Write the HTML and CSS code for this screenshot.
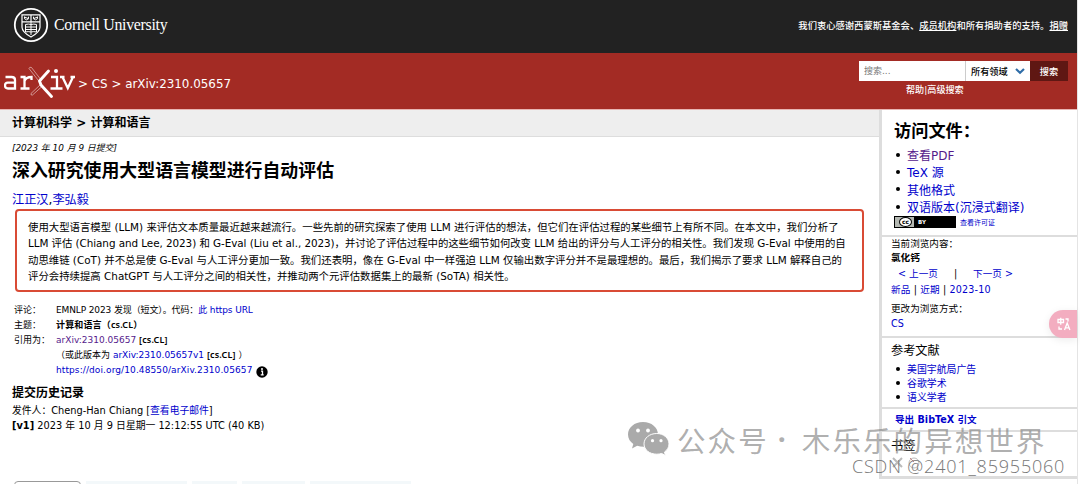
FILE: index.html
```html
<!DOCTYPE html>
<html lang="zh-CN">
<head>
  <meta charset="utf-8">
  <title>深入研究使用大型语言模型进行自动评估</title>
  <link rel="stylesheet" href="styles.css">
</head>
<body>
  <div class="page">
    <header>
      <div class="cornell-bar">
        <div class="cornell-logo">
          <svg width="36" height="36" viewBox="0 0 36 36" fill="none" stroke="#fff">
            <circle cx="18" cy="18" r="16.2" stroke-width="1.8"/>
            <path d="M9 7.800h18v12.500c0 4.600-4.600 7.300-9 9.700-4.400-2.400-9-5.100-9-9.700z" stroke-width="1.200"/>
            <path d="M9 14.800h18M18 8v7" stroke-width="1.200"/>
            <path d="M11.500 9.700v2q2 2.300 4 0v-2M20.500 9.700v2q2 2.300 4 0v-2M11.500 10l4 1.700M20.500 11.700l4-1.700" stroke-width="1"/>
            <path d="M12.500 17.500q2.800-.8 5.500 0 2.700-.8 5.500 0v7.500q-2.800-.8-5.500 0-2.700-.8-5.500 0zM18 15v13M12.500 20h11M12.500 22.500h11" stroke-width="1"/>
          </svg>
          <span>Cornell University</span>
        </div>
        <div class="sponsors">我们衷心感谢西蒙斯基金会、<a href="#">成员机构</a>和所有捐助者的支持。<a href="#">捐赠</a></div>
      </div>
      <div class="arxiv-bar">
        <div class="breadcrumbs">
          <svg class="arxiv-logo" width="72" height="34" viewBox="0 0 72 34" fill="none" stroke="#fff">
            <path d="M1.500 11h6q3.500 0 3.500 3v8.500H4q-3 0-3-3t3-2.800h7M16.500 11h4v11.500M16.500 22.500h9M20.500 15q1.500-4 7-4v3" stroke-width="2.300"/>
            <path d="M47 11h6v11.500M46.500 22.500h12M58.500 11l5.300 11L69 11M56 11h4.500M66.500 11H71" stroke-width="2.300"/>
            <circle cx="52" cy="5" r="2" fill="#fff" stroke="none"/>
            <path d="M44.500 5l-9 10 1.500 4 10.500 11.500" stroke-width="2.900" stroke-linecap="round" stroke-linejoin="round"/>
            <path d="M25 2.500l11 14M27.500 1.500l10 13M25 2.500q.5-2 2.500-1M37 18L27 27.500q-.500 2 1.500 1.500l10-9" stroke-width=".7" opacity=".7"/>
          </svg>
          <span>&gt; <a href="#">CS</a> &gt; arXiv:2310.05657</span>
        </div>
        <form class="search">
          <div class="search-row">
            <input type="text" placeholder="搜索...">
            <div class="select">所有领域
              <svg width="12" height="8" viewBox="0 0 12 8"><path d="M2 2l4 3.700L10 2" fill="none" stroke="#2f6da8" stroke-width="2.200"/></svg>
            </div>
            <button type="button">搜索</button>
          </div>
          <div class="help"><a href="#">帮助</a>|<a href="#">高级搜索</a></div>
        </form>
      </div>
    </header>

    <div class="columns">
      <main>
        <div class="subheader">计算机科学 &gt; 计算和语言</div>
        <div class="dateline">[2023 年 10 月 9 日提交]</div>
        <h1>深入研究使用大型语言模型进行自动评估</h1>
        <div class="authors"><a href="#">江正汉</a>,<a href="#">李弘毅</a></div>
        <blockquote class="abstract">
          <div>使用大型语言模型 (LLM) 来评估文本质量最近越来越流行。一些先前的研究探索了使用 LLM 进行评估的想法，但它们在评估过程的某些细节上有所不同。在本文中，我们分析了</div>
          <div class="tight">LLM 评估 (Chiang and Lee, 2023) 和 G-Eval (Liu et al., 2023)，并讨论了评估过程中的这些细节如何改变 LLM 给出的评分与人工评分的相关性。我们发现 G-Eval 中使用的自</div>
          <div>动思维链 (CoT) 并不总是使 G-Eval 与人工评分更加一致。我们还表明，像在 G-Eval 中一样强迫 LLM 仅输出数字评分并不是最理想的。最后，我们揭示了要求 LLM 解释自己的</div>
          <div>评分会持续提高 ChatGPT 与人工评分之间的相关性，并推动两个元评估数据集上的最新 (SoTA) 相关性。</div>
        </blockquote>
        <table class="metatable">
          <tr><td>评论：</td><td class="comments">EMNLP 2023 发现（短文）。代码：<a href="#">此 https URL</a></td></tr>
          <tr><td>主题：</td><td><b>计算和语言（cs.CL）</b></td></tr>
          <tr><td>引用为：</td><td><a class="visited" href="#">arXiv:2310.05657</a> <b>[cs.CL]</b></td></tr>
          <tr><td></td><td>（或此版本为 <a href="#">arXiv:2310.05657v1</a> <b>[cs.CL]</b> ）</td></tr>
          <tr><td></td><td class="doi"><a href="#">https://doi.org/10.48550/arXiv.2310.05657</a>
            <svg width="12" height="12" viewBox="0 0 12 12"><circle cx="6" cy="6" r="5.700"/><path d="M5 5.200h1.500v3.600M4.700 8.800h3" fill="none" stroke="#fff" stroke-width="1.300"/><circle cx="6" cy="3" r="1" fill="#fff"/></svg>
          </td></tr>
        </table>
        <div class="history">
          <h2>提交历史记录</h2>
          <div class="from">发件人：Cheng-Han Chiang [<a href="#">查看电子邮件</a>]</div>
          <div class="version"><b>[v1]</b> 2023 年 10 月 9 日星期一 12:12:55 UTC (40 KB)</div>
        </div>
        <div class="tabs"><i class="active"></i><i></i><i></i><i></i><i></i></div>
      </main>

      <aside>
        <section class="full-text">
          <h2>访问文件：</h2>
          <ul>
            <li><a class="visited" href="#">查看PDF</a></li>
            <li><a href="#">TeX 源</a></li>
            <li><a href="#">其他格式</a></li>
            <li><a href="#">双语版本(沉浸式翻译)</a></li>
          </ul>
          <div class="license">
            <span class="badge"><span class="cc">cc</span><b>BY</b></span>
            <a href="#">查看许可证</a>
          </div>
        </section>
        <section class="browse">
          <div>当前浏览内容：</div>
          <div class="context">氯化钙</div>
          <div class="prevnext"><a href="#">&lt; 上一页</a><span>|</span><a href="#">下一页 &gt;</a></div>
          <div class="list"><a href="#">新品</a> | <a href="#">近期</a> | <a href="#">2023-10</a></div>
          <div class="switch">更改为浏览方式：</div>
          <div><a href="#">CS</a></div>
        </section>
        <section class="refs">
          <h3>参考文献</h3>
          <ul>
            <li><a href="#">美国宇航局广告</a></li>
            <li><a href="#">谷歌学术</a></li>
            <li><a href="#">语义学者</a></li>
          </ul>
        </section>
        <section class="bibtex"><a href="#">导出 BibTeX 引文</a></section>
        <section class="bookmark">
          <h3>书签</h3>
          <svg width="34" height="14" viewBox="0 0 34 14" fill="none" stroke="#bbb"><path d="M2 2l9 9M11 2l-9 9" stroke-width="2"/><circle cx="23" cy="7" r="5"/><path d="M19 2l4 4" stroke="#c88"/></svg>
        </section>
      </aside>
    </div>

    <div class="translate">
      <svg width="14" height="14" viewBox="0 0 14 14" fill="none" stroke="#fff" stroke-width="1.300"><path d="M1 2.500h5.500v3H1zM3.750.7v7M8.500 2h2.500v2.500M2 9.500V12h3M7.500 13l2.700-7 2.700 7M8.500 10.800h3.400"/></svg>
    </div>
  </div>

  <div class="wechat">
    <svg width="42" height="34" viewBox="0 0 42 34">
      <path d="M15 0C6.500 0 0 5.500 0 12.500c0 4 2 7.200 5.300 9.500L4 26.500l5.200-2.700q3 1 6.500 1C23.500 24.800 30 19.500 30 12.500S23.500 0 15 0z" fill="#aaa"/>
      <path d="M28.800 11.500C21.500 11.500 16 16 16 21.900s5.500 10.300 12.800 10.300q2.500 0 4.900-.7l3.800 2-1-3.500c2.800-2 4.500-4.700 4.500-8.100 0-5.900-5.500-10.400-12.200-10.400z" fill="#aaa" stroke="#fff"/>
      <g fill="#fff"><circle cx="10" cy="8.500" r="1.900"/><circle cx="20" cy="8.500" r="1.900"/><circle cx="24.500" cy="18.700" r="1.600"/><circle cx="33" cy="18.700" r="1.600"/></g>
    </svg>
    <span class="label">公众号</span><span class="dot">·</span><span class="label">木乐乐的异想世界</span>
  </div>
  <div class="csdn">CSDN @2401_85955060</div>
</body>
</html>
```

FILE: styles.css
```css
* {
  box-sizing: border-box;
}

body {
  margin: 0;
  width: 1080px;
  height: 484px;
  overflow: hidden;
  position: relative;
  background: #fff;
  color: #000;
  font-family: "DejaVu Sans", "Noto Sans CJK SC", sans-serif;
  font-size: 9.6px;
  white-space: nowrap;
}

a {
  color: #0000cc;
  text-decoration: none;
}

a.visited {
  color: #551a8b;
}

h1, h2, h3, ul, blockquote {
  margin: 0;
  padding: 0;
}

.page {
  width: 1078px;
  height: 484px;
  border-right: 1px solid #e4e4e4;
  position: relative;
}

/* header */
.cornell-bar {
  height: 53px;
  padding: 0 9px 3px 13px;
  display: flex;
  align-items: center;
  justify-content: space-between;
  background: #222;
  color: #fff;
}

.cornell-logo {
  display: flex;
  align-items: center;
  gap: 5px;
  font-family: "Liberation Serif", serif;
  font-size: 15.9px;
  letter-spacing: -0.3px;
}

.sponsors {
  font-size: 9.3px;
  font-weight: 500;
}

.sponsors a {
  color: #fff;
  text-decoration: underline;
}

.arxiv-bar {
  height: 57px;
  padding-left: 4px;
  padding-right: 9px;
  display: flex;
  justify-content: space-between;
  background: #a32b24;
  border-bottom: 1px solid #e8b5b2;
  color: #fff;
}

.arxiv-bar a {
  color: #fff;
}

.breadcrumbs {
  display: flex;
  align-items: center;
  gap: 2px;
  padding-top: 4px;
  font-size: 11.9px;
}

.breadcrumbs span {
  padding-top: 1px;
}

.search {
  padding-top: 8px;
}

.search-row {
  display: flex;
  height: 20px;
}

.search input {
  width: 107px;
  padding: 0 5px;
  border: 0;
  border-right: 1px solid #ccc;
  border-radius: 0;
  background: #fff;
  font: inherit;
  font-size: 9px;
}

.search input::placeholder {
  color: #777;
}

.select {
  width: 64px;
  padding: 0 4px 0 5px;
  display: flex;
  align-items: center;
  justify-content: space-between;
  background: #fff;
  color: #000;
  font-size: 9.2px;
  font-weight: 500;
}

.search button {
  width: 38px;
  padding: 0;
  border: 0;
  background: #5f1713;
  color: #fff;
  font: 500 9.2px "Noto Sans CJK SC", sans-serif;
}

.help {
  margin: 2px 0 0 47px;
  line-height: 14px;
  font-size: 9.1px;
  font-weight: 500;
}

/* columns */
.columns {
  display: flex;
  height: 374px;
}

main {
  width: 879px;
}

.subheader {
  height: 27px;
  padding-left: 12px;
  line-height: 27px;
  background: #eee;
  border-bottom: 1px solid #ddd;
  font-size: 12px;
  font-weight: 600;
}

.dateline {
  margin: 4px 0 0 12px;
  line-height: 14px;
  font-size: 8.9px;
  font-style: italic;
}

h1 {
  margin-left: 12px;
  line-height: 31px;
  font-size: 17.9px;
  font-weight: 600;
}

.authors {
  margin: 4px 0 0 12px;
  line-height: 20px;
  font-size: 12.2px;
}

.abstract {
  width: 849px;
  height: 83px;
  margin: -1px 0 0 15px;
  padding: 8px 11px;
  border: 2px solid #d94b35;
  border-radius: 4px;
  line-height: 16.3px;
  font-size: 10.4px;
}

.abstract .tight {
  letter-spacing: -0.06px;
}

.metatable {
  height: 75px;
  margin: 10px 0 0 14px;
  border-collapse: collapse;
  font-size: 9px;
}

.metatable tr {
  height: 15px;
}

.metatable td {
  padding: 0;
  line-height: 14px;
}

.metatable td:first-child {
  width: 42px;
}

.metatable b {
  font-family: "Noto Sans", "Noto Sans CJK SC", sans-serif;
  font-weight: 600;
  line-height: 1;
  letter-spacing: 0.15px;
}

.metatable .comments {
  letter-spacing: -0.12px;
}

.doi a {
  letter-spacing: 0.1px;
}

.doi svg {
  margin: -2px 0 -2px 1px;
  vertical-align: -3px;
}

.history {
  margin: 6px 0 0 12px;
  font-size: 9.8px;
  line-height: 15px;
}

.history h2 {
  line-height: 20px;
  font-size: 12px;
  font-weight: 600;
}

.tabs {
  display: flex;
  gap: 5px;
  margin: 48px 0 0 14px;
}

.tabs i {
  height: 10px;
  width: 101px;
  background: #f3f8fa;
}

.tabs i.active {
  width: 67px;
  background: #fff;
  border: 1px solid #999;
  border-radius: 4px 4px 0 0;
}

.tabs i:nth-child(3) {
  width: 45px;
}

.tabs i:nth-child(4) {
  width: 63px;
}

/* sidebar */
aside {
  width: 198px;
  height: 369px;
  border-left: 3px solid #ddd;
  border-bottom: 3px solid #ddd;
}

aside section {
  border-bottom: 2px solid #ddd;
}

aside ul {
  list-style: none;
}

aside li {
  display: flex;
  align-items: center;
}

aside li::before {
  content: "";
  width: 4px;
  height: 4px;
  margin-right: 7px;
  border-radius: 50%;
  background: #000;
}

.full-text {
  height: 127px;
  padding: 8px 0 0 12px;
}

.full-text h2 {
  height: 28px;
  line-height: 27px;
  font-size: 17.2px;
  font-weight: 600;
}

.full-text li {
  height: 17.3px;
  padding-left: 2px;
  font-size: 12px;
}

.license {
  display: flex;
  align-items: center;
  gap: 4px;
  height: 14px;
  font-size: 7px;
}

.badge {
  display: flex;
  align-items: center;
  width: 62px;
  height: 12px;
  background: linear-gradient(90deg, #b4b8b2 19px, #000 19px);
  border: 1px solid #000;
  color: #fff;
  font-size: 5.5px;
}

.cc {
  width: 13px;
  height: 10px;
  margin: 0 6px 0 4px;
  border: 1px solid #000;
  border-radius: 50%;
  background: #fff;
  color: #000;
  line-height: 7px;
  text-align: center;
  font-weight: 700;
  font-size: 6px;
}

.browse {
  height: 101px;
  padding: 0 0 0 9px;
  line-height: 14px;
}

.context {
  font-weight: 600;
}

.prevnext {
  display: flex;
  gap: 16px;
  padding-left: 7px;
  line-height: 18px;
}

.list {
  line-height: 14px;
  letter-spacing: 0.15px;
}

.switch {
  margin-top: 5px;
}

.browse div:last-child {
  line-height: 16px;
}

.refs {
  height: 71px;
  padding: 4px 0 0 9px;
}

aside h3 {
  line-height: 19px;
  font-size: 12.2px;
  font-weight: 400;
}

.refs ul {
  padding: 1px 0 0 5px;
}

.refs li {
  height: 14px;
  font-size: 9.9px;
}

.bibtex {
  height: 23px;
  padding-left: 13px;
  line-height: 21px;
  font-size: 9.6px;
  font-weight: 600;
}

aside .bookmark {
  padding: 5px 0 0 9px;
  border: 0;
}

.bookmark svg {
  display: block;
}

/* floating button and watermarks */
.translate {
  position: absolute;
  right: 0;
  top: 310px;
  width: 28px;
  height: 28px;
  padding: 7px 0 0 8px;
  border-radius: 14px 0 0 14px;
  background: #f3adc0;
  box-shadow: 0 2px 8px rgba(0, 0, 0, 0.08);
}

.wechat {
  position: absolute;
  left: 628px;
  top: 421px;
  display: flex;
  align-items: center;
  height: 36px;
  color: rgba(130, 130, 130, 0.65);
  font-family: "Noto Sans CJK SC", sans-serif;
  font-size: 28.5px;
  font-weight: 400;
}

.wechat .label {
  margin-left: 7px;
  letter-spacing: 2.1px;
}

.wechat .dot {
  width: 26px;
  text-align: center;
  font-family: "Noto Sans", sans-serif;
  font-weight: 700;
}

.csdn {
  position: absolute;
  left: 852px;
  top: 454px;
  line-height: 24px;
  font-family: "Open Sans", sans-serif;
  font-size: 18px;
  font-weight: 300;
  letter-spacing: 0.8px;
  color: #777;
}
```
